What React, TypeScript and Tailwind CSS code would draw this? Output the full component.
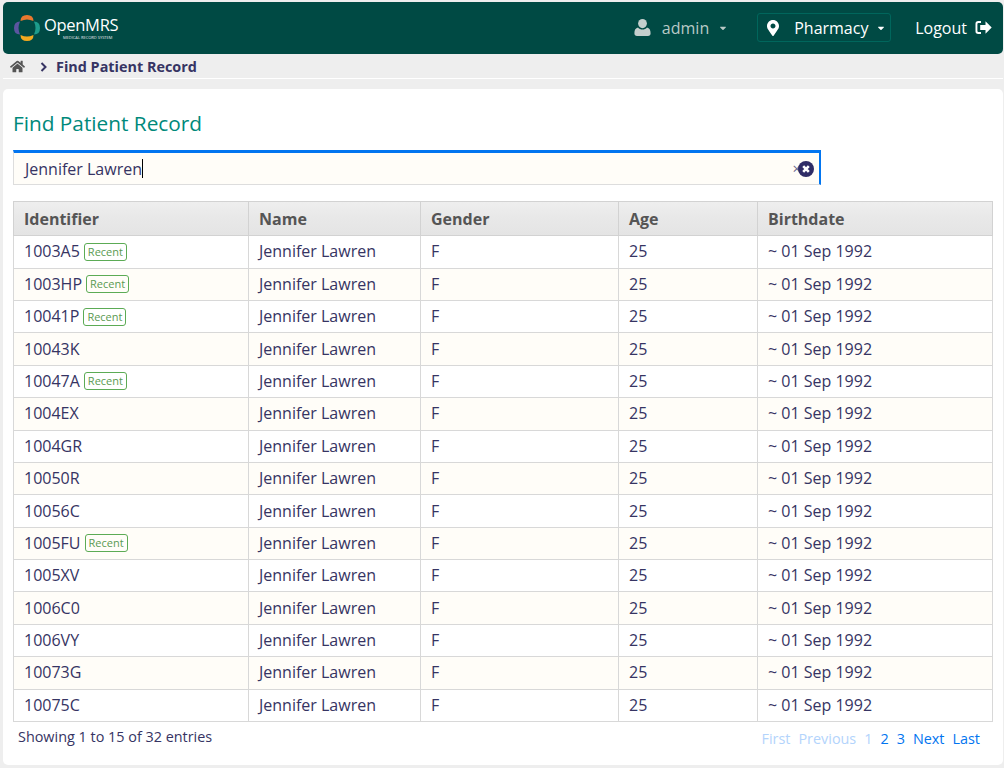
import React from 'react';
import { FaHome, FaMapMarkerAlt, FaCaretDown } from 'react-icons/fa';

const rows = [
  { id: '1003A5', recent: true },
  { id: '1003HP', recent: true },
  { id: '10041P', recent: true },
  { id: '10043K', recent: false },
  { id: '10047A', recent: true },
  { id: '1004EX', recent: false },
  { id: '1004GR', recent: false },
  { id: '10050R', recent: false },
  { id: '10056C', recent: false },
  { id: '1005FU', recent: true },
  { id: '1005XV', recent: false },
  { id: '1006C0', recent: false },
  { id: '1006VY', recent: false },
  { id: '10073G', recent: false },
  { id: '10075C', recent: false },
];

const Logo = () => (
  <svg width="28" height="28" viewBox="0 0 28 28" className="shrink-0">
    <path d="M7.5 7 Q7.5 1 14 1 Q20.5 1 20.5 7 Q17 5.5 14 5.5 Q11 5.5 7.5 7Z" fill="#e9782f" />
    <path d="M21 7.5 Q27 7.5 27 14 Q27 20.5 21 20.5 Q22.5 17 22.5 14 Q22.5 11 21 7.5Z" fill="#1d9b8c" />
    <path d="M7.5 21 Q11 22.5 14 22.5 Q17 22.5 20.5 21 Q20.5 27 14 27 Q7.5 27 7.5 21Z" fill="#f2a91f" />
    <path d="M7 7.5 Q1 7.5 1 14 Q1 20.5 7 20.5 Q5.5 17 5.5 14 Q5.5 11 7 7.5Z" fill="#5b55a0" />
  </svg>
);

const UserIcon = () => (
  <svg width="17" height="17" viewBox="0 0 17 17" fill="#c4cfcd">
    <ellipse cx="8.5" cy="4.6" rx="4.4" ry="4.6" />
    <path d="M4 8.6C5.2 10 6.7 10.6 8.5 10.6S11.8 10 13 8.6C15.4 9.2 16.6 11 16.6 14.2 16.6 15.9 15.6 17 14 17H3C1.4 17 .4 15.9.4 14.2.4 11 1.6 9.2 4 8.6Z" />
  </svg>
);

const SignOut = () => (
  <svg width="17" height="15" viewBox="0 0 17 15" fill="white">
    <path d="M6 1H3.2A2.7 2.7 0 0 0 .5 3.7v7.6A2.7 2.7 0 0 0 3.2 14H6v-2H3.4a1 1 0 0 1-1-1V4a1 1 0 0 1 1-1H6Z" />
    <path d="M10.5 1.2 16.7 7.5 10.5 13.8V10H5.2V5h5.3Z" />
  </svg>
);

const Chevron = () => (
  <svg width="8" height="10" viewBox="0 0 8 10" fill="none" stroke="#363463" strokeWidth="2">
    <path d="M1.5 1 5.5 5 1.5 9" />
  </svg>
);

const ClearIcon = () => (
  <svg width="16" height="16" viewBox="0 0 16 16">
    <circle cx="8" cy="8" r="8" fill="#2f2c66" />
    <path d="M5.2 5.2 10.8 10.8M10.8 5.2 5.2 10.8" stroke="white" strokeWidth="2.6" />
  </svg>
);

export default function App() {
  return (
    <div className="h-[768px] overflow-hidden bg-[#eeeeee] pt-[2px] pl-[3px] pr-px font-['Open_Sans',sans-serif] text-[#363463]">
      {/* Header */}
      <header className="flex h-[52px] items-center justify-between rounded-[5px] bg-[#004a44] pl-[10px] pr-[9px] text-white">
        <div className="flex items-center gap-[3px]">
          <Logo />
          <div className="flex flex-col">
            <span className="text-[16.5px] leading-[18px] tracking-[-0.3px]">OpenMRS</span>
            <span className="mt-[2px] ml-[19px] text-[4px] leading-[4px] whitespace-nowrap text-gray-200 uppercase">Medical Record System</span>
          </div>
        </div>
        <div className="mt-[-1px] flex items-center text-[16px]">
          <div className="flex items-center text-[#b9c9c6]">
            <UserIcon />
            <span className="ml-[11px]">admin</span>
            <FaCaretDown className="ml-[9px] h-[10px] w-[10px]" />
          </div>
          <div className="ml-[29px] flex h-[29px] w-[134px] items-center rounded-[3px] border border-[#00665c] pl-[9px]">
            <FaMapMarkerAlt className="h-[16px] w-[12px]" />
            <span className="ml-[15px]">Pharmacy</span>
            <FaCaretDown className="ml-[8px] h-[10px] w-[10px]" />
          </div>
          <span className="ml-[24px]">Logout</span>
          <span className="mr-[2px] ml-[8px] flex"><SignOut /></span>
        </div>
      </header>

      {/* Breadcrumb */}
      <nav className="flex h-[25px] items-center border-b border-white pt-[1px] pl-[7px] text-[14.4px] font-bold">
        <FaHome className="h-[15px] w-[15px] text-[#555555]" />
        <span className="ml-[15px] flex"><Chevron /></span>
        <span className="ml-[8px]">Find Patient Record</span>
      </nav>

      {/* Card */}
      <main className="mt-[10px] h-[676px] rounded-[5px] bg-white pl-[10px] pr-[10px]">
        <h1 className="pt-[20px] text-[20.8px] leading-[29px] font-normal text-[#00897b]">Find Patient Record</h1>

        <div className="mt-[12px] flex h-[35px] w-[808px] items-center border-t-[3px] border-r-[2px] border-b border-l border-t-[#0275f0] border-r-[#0275f0] border-b-[#dddddd] border-l-[#dddddd] bg-[#fffdf8] pl-[11px] pr-[5px] text-[16px]">
          <span>Jennifer Lawren</span>
          <span className="h-[19px] w-px bg-black" />
          <span className="ml-auto flex items-center">
            <span className="mr-[-3px] text-[15px] leading-none text-[#6c6a8c]">×</span>
            <ClearIcon />
          </span>
        </div>

        <table className="mt-[16px] w-[979px] table-fixed border-collapse text-[16px]">
          <colgroup>
            <col className="w-[235px]" />
            <col className="w-[172px]" />
            <col className="w-[198px]" />
            <col className="w-[139px]" />
            <col className="w-[235px]" />
          </colgroup>
          <thead>
            <tr className="h-[34.2px] bg-gradient-to-b from-[#eeeeee] via-[#e8e8e8] to-[#e4e4e4] text-left text-[#555555]">
              {['Identifier', 'Name', 'Gender', 'Age', 'Birthdate'].map((h) => (
                <th key={h} className="border border-[#d2d2d2] pl-[10px] text-[16px] font-bold">{h}</th>
              ))}
            </tr>
          </thead>
          <tbody>
            {rows.map((r, i) => (
              <tr key={r.id} className={`h-[32.4px] ${i % 2 === 1 ? 'bg-[#fffdf8]' : 'bg-white'}`}>
                <td className="border border-[#d8d8d8] pb-[1px] pl-[10px]">
                  <span className="flex items-center">
                    {r.id}
                    {r.recent && (
                      <span className="mt-[1px] ml-[4px] rounded-[3px] border border-[#5cab55] px-[3px] text-[11px] leading-[16px] text-[#5a9a52]">Recent</span>
                    )}
                  </span>
                </td>
                <td className="border border-[#d8d8d8] pb-[1px] pl-[10px]">Jennifer Lawren</td>
                <td className="border border-[#d8d8d8] pb-[1px] pl-[10px]">F</td>
                <td className="border border-[#d8d8d8] pb-[1px] pl-[10px]">25</td>
                <td className="border border-[#d8d8d8] pb-[1px] pl-[10px]">~ 01 Sep 1992</td>
              </tr>
            ))}
          </tbody>
        </table>

        {/* Footer */}
        <div className="flex items-start justify-between pl-[5px] pr-[13px] text-[14.4px]">
          <span className="pt-[5px] leading-[20px]">Showing 1 to 15 of 32 entries</span>
          <div className="flex gap-[8px] pt-[7px] leading-[20px] text-[#0275f0]">
            <span className="text-[#b3d4fc]">First</span>
            <span className="text-[#b3d4fc]">Previous</span>
            <span className="text-[#b3d4fc]">1</span>
            <span>2</span>
            <span>3</span>
            <span>Next</span>
            <span>Last</span>
          </div>
        </div>
      </main>
    </div>
  );
}
